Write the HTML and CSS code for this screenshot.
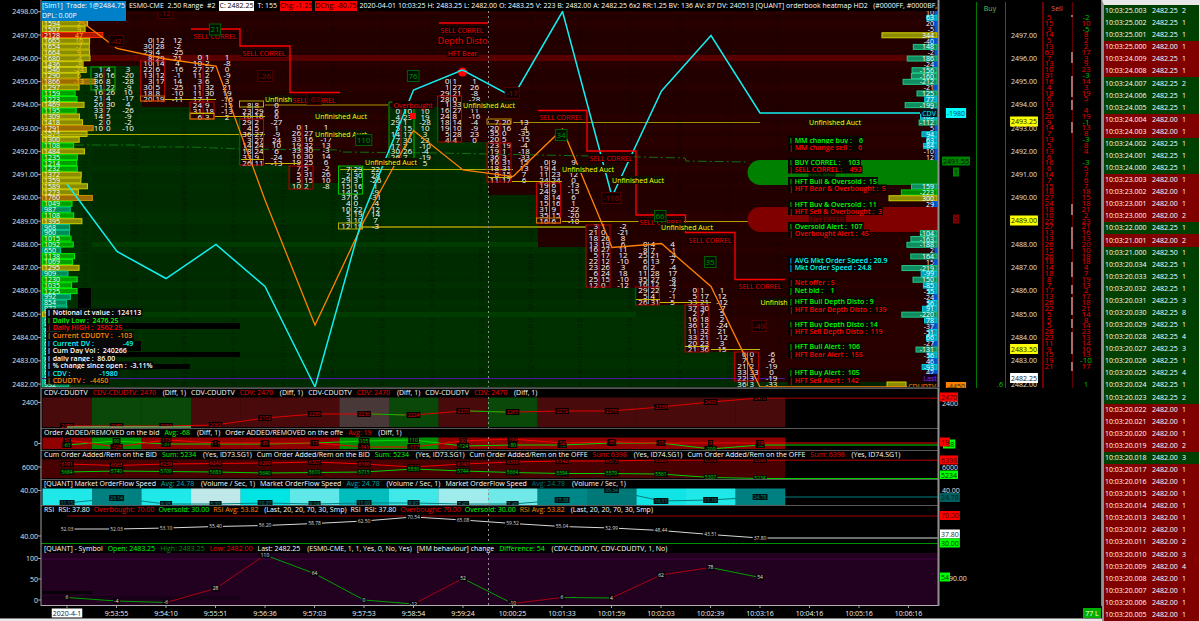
FILE: index.html
```html
<!DOCTYPE html>
<html lang="en">
<head>
    <meta charset="UTF-8">
    <title>ESM0-CME 2.50 Range #2</title>
    <link rel="stylesheet" href="styles.css">
</head>
<body>

<div class="window">

    <main class="charts">

        <section class="panel">
            <header class="head">
                <span class="trade">[Sim1]&nbsp; Trade: 1@2484.75<br>DPL: 0.00P</span>
                <span>ESM0-CME&nbsp; 2.50 Range&nbsp; #2</span>
                <span class="close">C: 2482.25</span>
                <span>T: 155</span>
                <span class="chg">Chg: -1.25</span>
                <span class="chg">DChg: -80.75</span>
                <span>2020-04-01 10:03:25 H: 2483.25 L: 2482.00 O: 2483.25 V: 223 B: 2482.00 A: 2482.25 6x2 RR:1.25 BV: 136 AV: 87 DV: 240513 [QUANT] orderbook heatmap HD2&nbsp;&nbsp; (#0000FF, #0000BF, #</span>
            </header>
            <svg id="price" viewBox="0 0 1102 388"></svg>
        </section>

        <section class="panel">
            <header class="head">
                <span>CDV-CDUDTV</span> <span class="red">CDV-CDUDTV: 2470</span> <span>&nbsp;(Diff, 1)</span>
                <span>CDV-CDUDTV</span> <span class="red">CDV: 2470</span> <span>&nbsp;(Diff, 1)</span>
                <span>CDV-CDUDTV</span> <span class="red">CDV: 2470</span> <span>&nbsp;(Diff, 1)</span>
                <span>CDV-CDUDTV</span> <span class="red">CDV: 2470</span> <span>&nbsp;(Diff, 1)</span>
            </header>
            <svg id="cdv" viewBox="0 388 1102 40"></svg>
        </section>

        <section class="panel">
            <header class="head">
                <span>Order ADDED/REMOVED on the bid</span> <span class="green">Avg: -68</span> <span>&nbsp;(Diff, 1)</span>
                <span>Order ADDED/REMOVED on the offe</span> <span class="red">Avg: 19</span> <span>&nbsp;(Diff, 1)</span>
            </header>
            <svg id="orders" viewBox="0 428 1102 22"></svg>
        </section>

        <section class="panel">
            <header class="head">
                <span>Cum Order Added/Rem on the BID</span> <span class="green">Sum: 5234</span> <span>&nbsp;(Yes, ID73.SG1)</span>
                <span>Cum Order Added/Rem on the BID</span> <span class="green">Sum: 5234</span> <span>&nbsp;(Yes, ID73.SG1)</span>
                <span>Cum Order Added/Rem on the OFFE</span> <span class="red">Sum: 6398</span> <span>&nbsp;(Yes, ID74.SG1)</span>
                <span>Cum Order Added/Rem on the OFFE</span> <span class="red">Sum: 6398</span> <span>&nbsp;(Yes, ID74.SG1)</span>
            </header>
            <svg id="cum" viewBox="0 450 1102 29"></svg>
        </section>

        <section class="panel">
            <header class="head">
                <span>[QUANT] Market OrderFlow Speed</span> <span class="teal">Avg: 24.78</span> <span>&nbsp;(Volume / Sec, 1)</span>
                <span>Market OrderFlow Speed</span> <span class="teal">Avg: 24.78</span> <span>&nbsp;(Volume / Sec, 1)</span>
                <span>Market OrderFlow Speed</span> <span class="teal dim">Avg: 24.78</span> <span>&nbsp;(Volume / Sec, 1)</span>
            </header>
            <svg id="speed" viewBox="0 479 1102 26"></svg>
        </section>

        <section class="panel">
            <header class="head tight">
                <span>RSI</span> <span>RSI: 37.80</span> <span class="red">Overbought: 70.00</span> <span class="green">Oversold: 30.00</span> <span class="orange">RSI Avg: 53.82</span> <span>&nbsp;(Last, 20, 20, 70, 30, Smp)</span>
                <span>RSI</span> <span>RSI: 37.80</span> <span class="red">Overbought: 70.00</span> <span class="green">Oversold: 30.00</span> <span class="orange">RSI Avg: 53.82</span> <span>&nbsp;(Last, 20, 20, 70, 30, Smp)</span>
            </header>
            <svg id="rsi" viewBox="0 505 1102 39"></svg>
        </section>

        <section class="panel">
            <header class="head">
                <span>[QUANT] - Symbol</span> <span class="green">Open: 2483.25</span> <span class="darkgreen">High: 2483.25</span> <span class="red">Low: 2482.00</span> <span>Last: 2482.25</span> <span>&nbsp;(ESM0-CME, 1, 1, Yes, 0, No, Yes)</span>
                <span>[MM behaviour] change</span> <span class="green">Difference: 54</span> <span>&nbsp;(CDV-CDUDTV, CDV-CDUDTV, 1, No)</span>
            </header>
            <svg id="mm" viewBox="0 544 1102 62"></svg>
        </section>

        <svg id="time" viewBox="0 606 1102 12"></svg>
    </main>

    <aside class="tape">
        <table>
            <tbody id="trades"></tbody>
        </table>
    </aside>

</div>

<script src="chart.js"></script>
</body>
</html>
```
FILE: styles.css
```css
body{
    margin: 0;
    background: #e8e8e8;
    font-family: "Open Sans", "Noto Sans", sans-serif;
    font-size: 7px;
    font-weight: 500;
    color: #ffffff;
}

.window{
    display: flex;
    align-items: flex-start;
}
.charts{
    flex: 1;
    min-width: 0;
    background: black;
    border-bottom: 1px solid #808080;
}
.panel{
    position: relative;
}
svg{
    display: block;
    width: 100%;
}
svg text{
    white-space: pre;
}

/* study line, lies over the top of its plot */
.head{
    position: absolute;
    top: 0;
    left: 42px;
    right: 165px;
    height: 10px;
    line-height: 10px;
    display: flex;
    gap: 5px;
    padding-left: 2px;
    overflow: hidden;
    white-space: nowrap;
}
.tight{
    gap: 4px;
}
.panel:first-child .head{
    top: 1px;
    height: 20px;
    gap: 3px;
    padding-left: 0;
}
.trade{
    background: #0080c8;
    height: 20px;
    padding-right: 1px;
}
.close{
    background: white;
    color: black;
    height: 10px;
    padding: 0 1px;
}
.chg{
    background: #ff0000;
    color: #200000;
    height: 10px;
}
.red{ color: #f00000; }
.green{ color: #00ff00; }
.darkgreen{ color: #009000; }
.teal{ color: #00a8a8; }
.dim{ color: #007070; }
.orange{ color: #ff8800; }

/* time and sales */
.tape{
    border-left: 2px solid #909090;
    border-right: 1px solid #e8e8e8;
    border-top: 5px solid #e8e8e8;
    width: 95px;
}
.tape table{
    width: 100%;
    height: 616px;
    border-collapse: collapse;
    line-height: 10px;
    font-size: 7px;
}
.tape td{
    padding: 0 1px;
    white-space: nowrap;
}
.tape td:last-child{
    width: 16px;
}
.up{ background: #004000; }
.down{ background: #800000; }
```
FILE: chart.js
```js
const NS = "http://www.w3.org/2000/svg";
const STEP = 49.5;
const TICK = 5.82;

function colX(i) { return 42.5 + STEP * i; }
function midX(i) { return 67 + STEP * i; }
function priceY(p) { return 35 + (2497 - p) * 23.27; }

function add(svg, tag, attrs) {
    const el = document.createElementNS(NS, tag);
    for (const key in attrs) el.setAttribute(key, attrs[key]);
    svg.appendChild(el);
    return el;
}
function rect(svg, x, y, x2, y2, fill, stroke) {
    return add(svg, "rect", {x: x, y: y, width: x2 - x, height: y2 - y, fill: fill, stroke: stroke || "none"});
}
function line(svg, points, color, width, dash) {
    return add(svg, "polyline", {points: points.join(" "), fill: "none", stroke: color,
        "stroke-width": width || 1, "stroke-dasharray": dash || "none"});
}
// y is the middle of the text
function text(svg, x, y, str, color, opt) {
    const o = opt || {};
    const size = o.size || 7;
    const el = add(svg, "text", {x: x, y: y + size * 0.36, fill: color, "font-size": size,
        "text-anchor": o.anchor || "middle", "font-weight": o.weight || 500});
    el.textContent = str;
    if (o.bg) {
        const b = el.getBBox();
        const h = o.h || size + 1;
        const r = add(svg, "rect", {x: b.x - 1, y: y - h / 2, width: b.width + 2, height: h,
            fill: o.bg, stroke: o.border || "none"});
        svg.insertBefore(r, el);
    }
    return el;
}
// repeatable noise for the book sizes
let seed = 7;
function rnd(n) {
    seed = (seed * 16807) % 2147483647;
    return seed % n;
}
function frame(svg, top, bottom) {
    line(svg, [[41, top], [41, bottom]], "#a0a0a0");
    line(svg, [[938.5, top], [938.5, bottom]], "#909090", 2);
    line(svg, [[1101.5, top], [1101.5, bottom]], "#808080");
}
function axis(svg, y, str) {
    text(svg, 38, y, str, "#e0e0e0", {anchor: "end"});
    line(svg, [[38, y], [41, y]], "#a0a0a0");
}

/* ---------- price panel ---------- */
const price = document.querySelector("#price");

const greenTop = [66, 66, 107, 118, 165, 183, 166, 107, 142, 195, 247, 288, 305, 352, 382];
rect(price, 42, 11, 938, 382, "#280000");
rect(price, 785, 382, 938, 388, "#002800");
greenTop.forEach(function (y, i) {
    rect(price, colX(i), y, colX(i + 1) + 0.5, 388, "#003000");
});
for (let y = 14.6; y < 384; y += TICK) {
    rect(price, 92, y, 938, y + TICK, "#000000").setAttribute("opacity", [0, 0.06, 0.12][rnd(3)]);
    for (let i = 1; i < 16; i++) {
        text(price, colX(i) - 7, y + 3, 3 + rnd(26), "#000000", {size: 5}).setAttribute("opacity", 0.45);
    }
}
rect(price, 92, 55, 938, 61, "#580000");
rect(price, 92, 242, 538, 247, "#003c00");
rect(price, 92, 312, 636, 317, "#003c00");

rect(price, 78, 288, 91, 308, "#000000");
rect(price, 42, 323, 240, 329, "#000000");
rect(price, 42, 341, 141, 351, "#000000");
rect(price, 42, 352, 240, 357, "#000000");
rect(price, 42, 364, 190, 369, "#000000");

// volume by price
const volumes = [1740, 1430, 1594, 1507, 2128, 1665, 1654, 1664, 1680, 1436, 1546, 1290, 1866, 1297, 1159, 1223,
    1469, 1195, 1309, 1418, 1791, 1574, 1300, 1108, 1484, 1235, 1214, 1232, 1372, 1359, 1589, 1273, 1760, 1049, 987,
    1108, 1395, 968, 960, 1015, 1092, 650, 1138, 1069, 1295, 909, 1230, 1035, 1225, 992, 854, 873, 1280, 620, 580,
    610, 590, 640, 600, 570, 620, 610, 640, 620, 932];
const deltas = {2: "2", 3: "9", 4: "47", 5: "16", 6: "-7", 7: "9", 8: "-4", 9: "-8", 10: "-24", 11: "6", 12: "-13"};
volumes.forEach(function (v, i) {
    const y = 11.7 + TICK * i;
    let fill = "#008c58", border = "#00c890";
    if (v >= 1000) { fill = "#00a000"; border = "#00f000"; }
    if (v >= 1250) { fill = "#8c8c00"; border = "#d0d000"; }
    if (v >= 1700) { fill = "#9c6c00"; border = "#d09000"; }
    if (v >= 2000) { fill = "#b01800"; border = "#ff3000"; }
    rect(price, 42.5, y - 2.5, 42 + v * 0.0286, y + 2.5, fill, border);
    text(price, 44, y, v, "#ffffe8", {anchor: "start"});
    if (deltas[i]) text(price, 79, y, deltas[i], "#f0c820");
});

// resting levels
line(price, [[41, 134.5], [265, 134.5]], "#b0b000");
line(price, [[265, 105], [388, 105]], "#b09000");
line(price, [[340, 169.5], [513, 169.5]], "#b0b000");
line(price, [[363, 227], [586, 227]], "#808000", 2);
line(price, [[513, 122.5], [760, 122.5]], "#a09000");
line(price, [[562, 221.5], [748, 221.5]], "#b0a000");
line(price, [[42, 378.5], [785, 378.5]], "#4818a0");
line(price, [[75, 145], [141, 145], [141, 147], [190, 147], [240, 149], [340, 150], [340, 152], [438, 153],
    [488, 154], [540, 155], [640, 157], [685, 158], [686, 161], [748, 162]], "#107010", 1, "9 3 2 3");
line(price, [[488.5, 11], [488.5, 388]], "#909090", 1, "2 3");

// footprint bars: column, first y, last y, top pair, bottom pair, deltas, boxes
const bars = [
    {i: 1, a: 69, b: 128, top: [1, 4, 3], end: [10, 0, -10], box: [[67, 90, "#00b000"]]},
    {i: 2, a: 40, b: 99, top: [0, 12, 12], end: [20, 19, -11], box: [[61, 101, "#b00000"], [96, 101, "#c06000"]]},
    {i: 3, a: 57, b: 117, top: [0, 1, 1], end: [6, 3, 2], box: [[102, 119, "#c00000"], [113, 119, "#d08000"]]},
    {i: 4, a: 105, b: 163, top: [8, 8, 0], end: [26, 11, -13], box: [[101, 107, "#b0b000"], [119, 165, "#c00000"]]},
    {i: 5, a: 127, b: 186, top: [0, 1, 1], end: [10, 2, -8], box: [[166, 189, "#b00000"]]},
    {i: 6, a: 169, b: 226, top: [7, 29, 22], end: [12, 19, -3], box: [[166, 194, "#00c000"], [223, 229, "#b0b000"]]},
    {i: 7, a: 111, b: 163, top: [0, 10, 10], end: [16, 10, 5], box: []},
    {i: 8, a: 81, b: 140, top: [0, 1, 1], end: [4, 4, 0], box: [[96, 142, "#b00000"]]},
    {i: 9, a: 122, b: 180, top: [7, 20, 13], end: [11, 17, 6], box: [[119, 124, "#c09000"], [143, 182, "#b00000"]]},
    {i: 10, a: 162, b: 221, top: [0, 9, 9], end: [16, 6, -10], box: [[183, 223, "#c00000"], [218, 223, "#d08000"]]},
    {i: 11, a: 226, b: 285, top: [3, 1, -2], end: [12, 0, -12], box: [[225, 287, "#b00000"]]},
    {i: 12, a: 244, b: 302, top: [0, 4, 4], end: [26, 31, 5], box: [[287, 305, "#b00000"]]},
    {i: 13, a: 290, b: 349, top: [0, 1, 1], end: [21, 36, 15], box: [[305, 352, "#b00000"]]},
    {i: 14, a: 354, b: 384, top: [6, 0, -6], end: [36, 3, -33], box: [[352, 381, "#b00000"]]}
];
bars.forEach(function (bar) {
    const x = colX(bar.i);
    const cx = x + 12;
    const rows = Math.round((bar.b - bar.a) / TICK);
    if (bar.i === 7) {
        line(price, [[x, 163], [x, 102], [cx + 12, 102]], "#00a000");
        line(price, [[cx + 13, 102], [cx + 13, 163]], "#00c000");
    }
    line(price, [[cx, bar.a - 2], [cx, bar.b + 2]], bar.i % 2 ? "#c00030" : "#7088a0", 1);
    for (let n = 0; n <= rows; n++) {
        const y = bar.a + (bar.b - bar.a) * n / rows;
        let v = [rnd(38), rnd(34)];
        v.push(v[1] - v[0]);
        if (n === 0) v = bar.top;
        if (n === rows) v = bar.end;
        text(price, cx - 1, y, v[0], "#ffffff", {anchor: "end", size: 8});
        text(price, cx + 2, y, v[1], "#ffffff", {anchor: "start", size: 8});
        text(price, x + 36, y, v[2], "#ffffff", {size: 8});
    }
    bar.box.forEach(function (b) {
        rect(price, x - 1, b[0], x + 23, b[1], "none", b[2]);
    });
});
[[165, 216, 99], [215, 265, 116], [191, 214, 113], [265, 300, 163], [488, 512, 177], [512, 562, 181], [562, 612, 221],
    [241, 264, 159], [636, 660, 299], [660, 711, 302], [685, 709, 346], [711, 760, 349]].forEach(function (l) {
    line(price, [[l[0], l[2] + 0.5], [l[1], l[2] + 0.5]], "#c8b800");
});

// net bid and net offer zones
add(price, "path", {d: "M938 160H760a12.500 12.500 0 0 0 0 25H938z", fill: "#008000"});
add(price, "path", {d: "M938 207H760a12.500 12.500 0 0 0 0 25H938z", fill: "#800000"});
text(price, 822, 173, "Net BID", "#006000", {bg: "#002000"});
text(price, 827, 219, "Net OFFER", "#900000", {bg: "#300000"});

// depth at the right edge
const depth = [10, 63, 20, -5, 344, -40, 148, -2, 186, -24, -156, -160, -212, -21, 125, 77, -199, 0, 103, -112, 5,
    94, 63, -84, -10, 12, null, null, null, null, 159, -223, 300, 29, null, null, null, null, -104, -163, -188, 2,
    164, 15, -219, -99, 150, -85, -55, -24, 56, 91, -220, 78, -37, -51, 66, -27, -131, -56, 46, -93, 42];
depth.forEach(function (v, n) {
    if (v === null) return;
    const y = 12 + TICK * n;
    const size = Math.abs(v);
    let fill = "#0050c0", border = "#0060e0";
    if (size >= 50) { fill = "#00a0b8"; border = "#00d0e0"; }
    if (size >= 104) { fill = "#108c60"; border = "#20c888"; }
    if (size >= 221) { fill = "#008c00"; border = "#00d000"; }
    if (size >= 290) { fill = "#8c8c00"; border = "#d0d000"; }
    rect(price, 937 - Math.max(2, size * 0.16), y - 2.5, 937, y + 2.5, fill, border);
    text(price, 934, y, v, "#ffffff", {anchor: "end"});
});
rect(price, 887, 382, 906, 388, "#8c8c00", "#d0d000");

// indicator curves
line(price, [[67, 2], [78, 19], [117, 48.5], [166, 59], [216, 66], [265, 200], [315, 325], [364, 221], [413.5, 130.5],
    [463, 170], [513, 176.5], [562.5, 129], [612, 247.5], [661.5, 243.5], [711, 286.5], [760, 387], [938, 387]],
    "#ff8000", 1.3);
line(price, [[67, 184], [117, 251.5], [166, 278.5], [216, 244.5], [265, 286.5], [315, 387], [364, 212], [413.5, 90],
    [462.5, 70], [513, 97], [562.5, 11.5], [612, 196.5], [661.5, 91], [711, 35.5], [760, 113], [920, 113]],
    "#10f0f0", 1.5);
line(price, [[191, 29], [240, 29], [240, 46], [290, 46], [290, 92.5], [340, 92.5]], "#ff0000", 1.3);
line(price, [[439, 23], [488, 23]], "#ff0000", 1.3);
line(price, [[538, 110.5], [587, 110.5], [587, 151], [636, 151], [636, 215], [685.5, 215], [685.5, 232.5],
    [735, 232.5], [735, 279.5], [785, 279.5]], "#ff0000", 1.3);
add(price, "circle", {cx: 462.5, cy: 72, r: 4.5, fill: "#ff0000"});
rect(price, 410, 113, 416, 119, "#ff0000");
line(price, [[458, 71.5], [462.5, 70], [467, 72]], "#10f0f0", 1.5);

// signals written on the chart
[[215, 36], [264, 53], [314, 100], [462, 30], [561, 117], [611, 158], [661, 222], [710, 240], [760, 286]]
    .forEach(function (p) {
        text(price, p[0], p[1], "SELL CORREL", "#f00000", {bg: "#100000"});
    });
text(price, 462.5, 41, "Depth Disto", "#f00000", {size: 9, bg: "#100000"});
text(price, 462.5, 53, "HFT Bear", "#ff0000", {bg: "#100000"});
text(price, 413, 105, "Overbought", "#f00000", {bg: "#100000"});
[[341, 116], [341, 134], [391, 162], [489, 105], [588, 169], [638, 180], [687, 227], [835, 122]].forEach(function (p) {
    text(price, p[0], p[1], "Unfinished Auct", "#ffff00", {bg: "#101000"});
});
text(price, 278.5, 99, "Unfinish", "#ffff00", {bg: "#101000"});
text(price, 774, 302, "Unfinish", "#ffff00", {bg: "#101000"});
[[215, 29.5, 21], [413, 76, 76], [363.5, 140, 110], [561, 135, 34], [660, 216, 66], [710, 262, 35]]
    .forEach(function (p) {
        text(price, p[0], p[1], p[2], "#009000", {size: 8, bg: "#001000", border: "#006000", h: 11});
    });
[[165, 13, -12], [116, 41, -42], [265, 76, -26], [314, 99, -63], [512, 93, -17], [611, 198, -116], [759, 326, -49]]
    .forEach(function (p) {
        text(price, p[0], p[1], p[2], "#900000", {size: 8, bg: "#100000", border: "#500000", h: 11});
    });

const GREEN = "#00ff00", RED = "#ff0000", CYAN = "#00ffff", WHITE = "#ffffff", ORANGE = "#ff8800";
[
    [140, "MM change buy :    6", GREEN], [147.5, "MM change sell :    6", RED],
    [162, "BUY CORREL :    103", GREEN], [169.5, "SELL CORREL :    493", RED],
    [181, "HFT Bull & Oversold :  15", GREEN], [188.5, "HFT Bear & Overbought :  5", RED],
    [204, "HFT Buy & Oversold :  11", GREEN], [211, "HFT Sell & Overbought :  3", RED],
    [226, "Oversold Alert :  107", GREEN], [233.5, "Overbought Alert :  45", RED],
    [260, "AVG Mkt Order Speed : 20.9", CYAN], [267.5, "Mkt Order Speed : 24.8", CYAN],
    [282.5, "Net offer : 5", RED], [290.5, "Net bid :    1", GREEN],
    [301.5, "HFT Bull Depth Disto : 9", GREEN], [309.5, "HFT Bear Depth Disto :  139", RED],
    [324, "HFT Buy Depth Disto : 14", GREEN], [331.5, "HFT Sell Depth Disto :  119", RED],
    [346.5, "HFT Bull Alert :  106", GREEN], [354.5, "HFT Bear Alert :  155", RED],
    [372.5, "HFT Buy Alert :  105", GREEN], [380.5, "HFT Sell Alert :  142", RED]
].forEach(function (l) {
    text(price, 789, l[0], "| " + l[1], l[2], {anchor: "start", weight: 600, bg: "#080400"});
});
[
    [312.5, "Notional ct value :  124113", WHITE], [320, "Daily Low :  2476.25", "#00ff00"],
    [327.5, "Daily HIGH :  2562.25", RED], [335.5, "Current CDUDTV :   -103", ORANGE],
    [343, "Current DV :                -49", CYAN], [350.5, "Cum Day Vol :  240266", WHITE],
    [358, "daily range :  86.00", WHITE], [365.5, "% change since open :  -3.11%", WHITE],
    [373, "CDV :                -1980", CYAN], [380.5, "CDUDTV :   -4450", ORANGE]
].forEach(function (l) {
    text(price, 47, l[0], "| " + l[1], l[2], {anchor: "start", weight: 600, bg: "#080808"});
});

text(price, 929, 113, "CDV", "#00f0f0", {bg: "#001820"});
text(price, 930, 378, "Last", "#8030ff", {bg: "#100020"});
text(price, 922, 386, "CDUDTV", "#ff8800", {bg: "#100800"});
rect(price, 0, 0, 40, 8, "#000000");
rect(price, 42, 1, 938, 11, "#000000");
frame(price, 0, 388);
line(price, [[41, 387.5], [939, 387.5]], "#404040");

for (let p = 2498; p >= 2482; p--) {
    axis(price, priceY(p), p + ".00");
    if (p < 2498) text(price, 1024, priceY(p), p + ".00", "#e0e0e0");
}
text(price, 956, 113, "-1980", "#004048", {bg: "#00ffff", h: 10});
text(price, 956, 161, "2491.55", "#001000", {bg: "#008000", h: 9});
text(price, 956, 172, "1", "#001000", {bg: "#008000", h: 9});
text(price, 956, 219, "5", "#200000", {bg: "#800000", h: 9});
text(price, 956, 386, "-4450", "#402000", {bg: "#ff8000"});
text(price, 1024, 121.5, "2493.25", "#202000", {bg: "#ffff00", h: 10});
text(price, 1024, 220.5, "2489.00", "#202000", {bg: "#ffff00", h: 10});
text(price, 1024, 349, "2483.50", "#202000", {bg: "#ffff00", h: 10});
text(price, 1024, 378, "2482.25", "#202020", {bg: "#ffffff", h: 10});

// depth ladder
line(price, [[976.5, 2], [976.5, 388]], "#007800");
line(price, [[1005.5, 2], [1005.5, 388]], "#007800");
line(price, [[1043, 2], [1043, 388]], "#700000", 2);
line(price, [[1072.5, 2], [1072.5, 388]], "#600000");
text(price, 990, 8, "Buy", "#60c060");
text(price, 1057, 8, "Sell", "#e06060");
const asks = [5, 15, 3, 14, 5, 13, 63, 7, 13, 10, 31, 16, 4, 18, 6, 13, 5, 20, 9, 14, 7, 13, 5, 13, 6, 16, 6, 14, 7, 15];
const pulls = [-2, 10, -5, 8, 2, 2, 17, 3, 9, 23, -3, 14, 3, 19, 5, "", 4, 19, -1, 13, 8, -3, 8, 4, "", -3, 5, 7, 6, 7];
for (let n = 0; n < 61; n++) {
    const y = 17 + TICK * n;
    const a = asks[n] || 5 + rnd(24);
    const p = n < pulls.length ? pulls[n] : 2 + rnd(22);
    text(price, 1049, y, a, "#f00000", {size: 8});
    text(price, 1086, y, n === 59 ? -10 : p, p < 0 || n === 59 ? "#00c000" : "#f00000", {size: 8});
}
text(price, 1000, 384, ".6", "#00d000");
text(price, 1086, 384, "1", "#00d000");
[[15, 17], [52, 63], [76, 97], [100, 110], [122, 133], [204, 215], [227, 249], [262, 277], [285, 294], [297, 315],
    [319, 328], [332, 354], [362, 371]].forEach(function (b) {
    rect(price, 1071, b[0], 1073, b[1], "#b06868");
});

/* ---------- studies ---------- */
function columns(svg, colors, top, bottom) {
    colors.forEach(function (c, i) {
        rect(svg, colX(i), top, colX(i + 1) + 0.3, bottom, c);
    });
}
function study(svg, ys, values, color, bg) {
    const pts = ys.map(function (y, i) { return [midX(i), y]; });
    line(svg, pts.concat([[938, ys[14]]]), color);
    values.forEach(function (v, i) {
        text(svg, midX(i), ys[i], v, color, {size: 5, bg: bg});
    });
}
function cover(svg, top) {
    rect(svg, 0, top, 938, top + 9.5, "#000000");
    line(svg, [[41, top], [939, top]], "#b0b0b0");
    line(svg, [[488.5, top + 9], [488.5, top + 66]], "#909090", 1, "2 3");
}

const cdv = document.querySelector("#cdv");
const R = "#480a0a", G = "#0a480a";
columns(cdv, [R, G, G, R, R, R, "#483838", G, R, G, R, R, R, R, R], 397, 427);
study(cdv, [426, 426, 426, 425, 418, 414, 414, 415, 411, 412, 411, 411, 407, 402, 398],
    [2059, 2080, 2084, 2062, 2172, 2230, 2236, 2224, 2270, 2265, 2272, 2276, 2339, 2410, 2470], "#e00000", "#080000");
line(cdv, [[67, 427], [191, 427]], "#90ff90");
line(cdv, [[372, 414], [405, 415]], "#00c000");
line(cdv, [[470, 411], [505, 412]], "#00c000");
cover(cdv, 388);
frame(cdv, 388, 428);
axis(cdv, 402.5, "2400");
text(cdv, 942, 403, "2400", "#e0e0e0", {anchor: "start"});
text(cdv, 941, 397, "2470", "#500000", {anchor: "start", bg: "#ff0000", h: 9});

const orders = document.querySelector("#orders");
const RR = "#900000", GG = "#008c00";
columns(orders, [RR, GG, RR, RR, RR, RR, GG, GG, RR, RR, RR, RR, RR, RR, RR], 437, 449);
study(orders, [445, 441, 444, 444, 444, 443, 441, 440, 446, 445, 445, 443, 443, 449, 445],
    [-61, 90, -31, -11, -30, 17, 105, 110, -124, -80, -70, -35, -11, -209, -68], "#00d800", "#080800");
study(orders, [440, 447, 440, 443, 443, 443, 447, 447, 441, 439, 443, 442, 443, 443, 443],
    [57, -128, 173, 1, 30, 17, -141, -117, 90, 160, 32, 35, 11, 9, 19], "#f00000", "#100000");
cover(orders, 428);
frame(orders, 428, 450);
axis(orders, 443.5, "0");
text(orders, 944, 444, "-68", "#003000", {anchor: "start", bg: "#00ff00", h: 9});
text(orders, 941, 442, "19", "#500000", {anchor: "start", bg: "#ff0000", h: 9});

const cum = document.querySelector("#cum");
rect(cum, 42, 459, 785, 478, "#480000");
study(cum, [464, 465.5, 464, 463.5, 463, 462, 464, 467, 464, 462, 461, 461, 460, 460, 460],
    [6191, 6063, 6239, 6240, 6290, 6307, 6166, 6049, 6143, 6310, 6342, 6377, 6388, 6379, 6398], "#f00000", "#100000");
study(cum, [472, 471, 471.5, 472, 473, 472.5, 472, 469, 471, 472.5, 473.5, 473.5, 474, 477.5, 478.5],
    [5684, 5740, 5709, 5683, 5640, 5610, 5715, 5830, 5744, 5664, 5594, 5579, 5561, 5307, 5234], "#00d000", "#001000");
cover(cum, 450);
frame(cum, 450, 479);
axis(cum, 467, "6000");
text(cum, 942, 467, "6000", "#e0e0e0", {anchor: "start"});
text(cum, 941, 460, "6398", "#500000", {anchor: "start", bg: "#ff0000", h: 9});
text(cum, 941, 475.5, "5234", "#003000", {anchor: "start", bg: "#00ff00", h: 10});

const speed = document.querySelector("#speed");
columns(speed, ["#20e8e8", "#008080", "#20e8e8", "#c0e8e8", "#00e4e4", "#60e8e8", "#00bcbc", "#40e8e8", "#a0ecec",
    "#70e8e8", "#008888", "#007878", "#10e4e4", "#20e8e8", "#008080"], 488, 505);
study(speed, [503, 498, 504, 504, 503, 504, 503, 503, 504, 504, 500, 490, 501, 500, 497],
    ["11.15", "23.14", "8.95", "5.70", "10.37", "9.04", "11.00", "9.97", "7.47", "7.49", "17.38", "35.34", "16.11",
        "17.19", "24.78"], "#008080", "#001414");
cover(speed, 479);
frame(speed, 479, 505);
axis(speed, 490.5, "40.00");
text(speed, 942, 490.5, "40.00", "#e0e0e0", {anchor: "start"});
text(speed, 941, 497.5, "24.78", "#001818", {anchor: "start", bg: "#006060", h: 9});

const rsi = document.querySelector("#rsi");
line(rsi, [[67, 516], [938, 516]], "#a00000");
study(rsi, [529, 529, 528, 526.5, 525.5, 523.5, 521, 517, 520, 523.5, 526.5, 528, 530.5, 534.5, 538],
    ["52.03", "52.03", "53.10", "55.40", "56.20", "58.78", "62.50", "70.54", "65.08", "59.52", "55.04", "52.99",
        "48.44", "43.51", "37.80"], "#d8d8d8", "#000000");
cover(rsi, 505);
line(rsi, [[41, 543.5], [938, 543.5]], "#009000");
frame(rsi, 505, 544);
axis(rsi, 536, "40.00");
text(rsi, 941, 515.5, "70.00", "#500000", {anchor: "start", bg: "#ff0000", h: 9});
text(rsi, 941, 534, "37.80", "#303030", {anchor: "start", bg: "#ffffff", h: 9});

const mm = document.querySelector("#mm");
rect(mm, 42, 553, 938, 605, "#220020");
rect(mm, 42, 558, 938, 560, "#300030");
rect(mm, 42, 591, 92, 594, "#080008");
rect(mm, 42, 596, 240, 600, "#180018");
const mmY = [597.5, 601, 602.5, 588.5, 555, 573.5, 600, 604, 578.5, 603.5, 597.5, 598, 575, 567.5, 577.5];
"ggrrgggrgrgrrg".split("").forEach(function (c, i) {
    line(mm, [[midX(i), mmY[i]], [midX(i + 1), mmY[i + 1]]], c === "g" ? "#00a000" : "#a80010");
});
[6, -4, -6, 28, 110, 64, 0, -12, 52, -10, 6, 4, 62, 78, 54].forEach(function (v, i) {
    text(mm, midX(i), mmY[i], v, "#e0e0e0", {size: 5, bg: "#080008"});
});
rect(mm, 42, 544, 938, 552, "#000000");
line(mm, [[488.5, 553], [488.5, 605]], "#909090", 1, "2 3");
line(mm, [[41, 605.5], [939, 605.5]], "#b0b0b0");
frame(mm, 544, 606);
axis(mm, 558.5, "100");
axis(mm, 579, "50");
axis(mm, 600, "0");
text(mm, 949, 578.5, "90.00", "#e0e0e0", {anchor: "start"});
text(mm, 941, 577, "54", "#003000", {anchor: "start", bg: "#00ff00", h: 9});
// the oversold tag reaches over both lower panels
[rsi, mm].forEach(function (svg) {
    text(svg, 941, 543, "30.00", "#003000", {anchor: "start", bg: "#00ff00", h: 9});
});

/* ---------- time axis ---------- */
const time = document.querySelector("#time");
["2020-4-1", "9:53:55", "9:54:10", "9:55:51", "9:56:36", "9:57:03", "9:57:53", "9:58:54", "9:59:24", "10:00:25",
    "10:01:33", "10:01:59", "10:02:03", "10:02:39", "10:03:16", "10:04:16", "10:05:16", "10:06:16"]
    .forEach(function (t, i) {
        line(time, [[midX(i), 606], [midX(i), 608]], "#a0a0a0");
        text(time, midX(i), 613, t, i ? "#f0f0f0" : "#202020", {bg: i ? "" : "#ffffff", h: 9});
    });
rect(time, 1083, 608, 1101, 618, "#00b000");
text(time, 1092, 613, "77 L", "#ffffff");

/* ---------- time and sales ---------- */
// time, price, size, side
const trades = `25.003 25 2 u,25.002 25 1 u,25.001 25 1 u,25.000 00 1 d,24.009 25 1 d,24.008 25 1 d,24.007 25 2 u,
24.006 25 1 u,24.005 25 1 u,24.004 00 1 d,24.003 00 1 d,24.002 25 1 u,24.001 25 1 u,24.000 25 1 u,23.003 00 1 d,
23.002 00 1 d,23.001 00 1 d,23.000 00 2 d,22.000 25 1 u,21.001 00 2 d,21.000 50 1 u,20.034 25 1 u,20.033 25 1 u,
20.032 25 1 u,20.031 25 3 u,20.030 25 8 u,20.029 25 1 u,20.028 25 4 u,20.027 25 3 u,20.026 25 1 u,20.025 25 4 u,
20.024 25 1 u,20.023 25 2 u,20.022 00 1 d,20.021 00 1 d,20.020 00 1 d,20.019 00 2 d,20.018 00 3 u,20.017 00 1 d,
20.016 00 1 d,20.015 00 1 d,20.014 00 1 d,20.013 00 1 d,20.012 00 1 d,20.011 00 2 d,20.010 00 3 d,20.009 00 4 d,
20.008 00 1 d,20.007 00 1 d,20.006 00 1 d,20.005 00 1 d`;
const body = document.querySelector("#trades");
for (const row of trades.split(",")) {
    const t = row.trim().split(" ");
    const tr = document.createElement("tr");
    tr.className = t[3] === "u" ? "up" : "down";
    tr.innerHTML = `<td>10:03:${t[0]}</td><td>2482.${t[1]}</td><td>${t[2]}</td>`;
    body.appendChild(tr);
}
```
